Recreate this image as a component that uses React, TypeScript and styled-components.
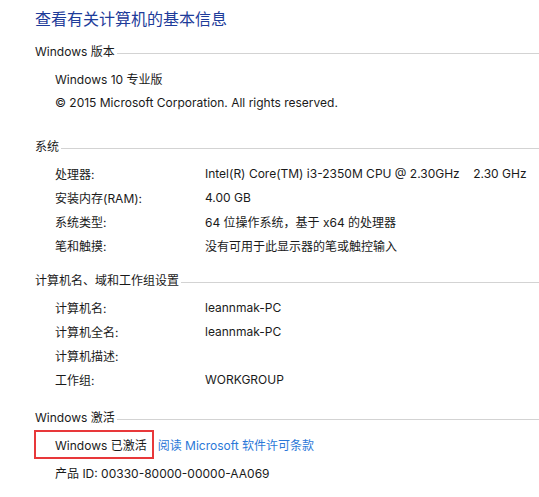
import React from "react";
import styled, { createGlobalStyle } from "styled-components";

const text_color = "#1a1a1a";
const title_blue = "#1e3c9a";
const link_blue = "#2b78d8";
const rule_grey = "#d3d3d3";
const mark_red = "#e8383a";

const GlobalStyle = createGlobalStyle`
    html, body {
        margin: 0;
        padding: 0;
        background: #ffffff;
    }
    body {
        font-family: Inter, "Noto Sans CJK SC", sans-serif;
        font-size: 12px;
        color: ${text_color};
    }
`;

const sections = [
    {
        title: "Windows 版本",
        gap: 11,
        after: 23,
        rows: [
            { label: "Windows 10 专业版" },
            { label: "© 2015 Microsoft Corporation. All rights reserved." },
        ],
    },
    {
        title: "系统",
        gap: 13,
        after: 0,
        rows: [
            { label: "处理器:", value: "Intel(R) Core(TM) i3-2350M CPU @ 2.30GHz\u00a0\u00a0\u00a0 2.30 GHz" },
            { label: "安装内存(RAM):", value: "4.00 GB" },
            { label: "系统类型:", value: "64 位操作系统，基于 x64 的处理器" },
            { label: "笔和触摸:", value: "没有可用于此显示器的笔或触控输入" },
        ],
    },
    {
        title: "计算机名、域和工作组设置",
        gap: 14,
        after: 0,
        rows: [
            { label: "计算机名:", value: "leannmak-PC" },
            { label: "计算机全名:", value: "leannmak-PC" },
            { label: "计算机描述:", value: "" },
            { label: "工作组:", value: "WORKGROUP" },
        ],
    },
];

export const App = () => {
    return (
        <Page>
            <GlobalStyle />
            <Title>查看有关计算机的基本信息</Title>
            {sections.map((s) => (
                <Section key={s.title} $gap={s.gap} $after={s.after}>
                    <Header>
                        <HeaderText>{s.title}</HeaderText>
                        <Rule />
                    </Header>
                    {s.rows.map((r, j) =>
                        "value" in r ? (
                            <Row key={j}>
                                <Label>{r.label}</Label>
                                <Value>{r.value}</Value>
                            </Row>
                        ) : (
                            <Row key={j}>
                                <Wide>{r.label}</Wide>
                            </Row>
                        )
                    )}
                </Section>
            ))}
            <Section $gap={17}>
                <Header>
                    <HeaderText>Windows 激活</HeaderText>
                    <Rule />
                </Header>
                <ActivationRow>
                    <Marked>Windows 已激活</Marked>
                    <Link href="#">阅读 Microsoft 软件许可条款</Link>
                </ActivationRow>
                <Row>
                    <Wide>产品 ID: 00330-80000-00000-AA069</Wide>
                </Row>
            </Section>
        </Page>
    );
};

const Page = styled.div`
    padding: 7px 0 0 35px;
    width: 539px;
    box-sizing: border-box;
`;

const Title = styled.h1`
    margin: 0;
    font-size: 16px;
    font-weight: normal;
    line-height: 24px;
    color: ${title_blue};
`;

const Section = styled.section<{ $gap: number; $after?: number }>`
    margin-top: ${(p) => p.$gap}px;
    margin-bottom: ${(p) => p.$after ?? 0}px;
`;

const Header = styled.div`
    display: flex;
    align-items: center;
    height: 20px;
`;

const HeaderText = styled.span`
    white-space: nowrap;
    line-height: 20px;
`;

const Rule = styled.div`
    flex: 1;
    height: 1px;
    margin: 3px 0 0 2px;
    background: ${rule_grey};
`;

const Row = styled.div`
    display: grid;
    grid-template-columns: 150px 1fr;
    align-items: center;
    height: 24px;
    padding-left: 20px;
    white-space: nowrap;
    &:nth-of-type(2) {
        margin-top: 4px;
    }
`;

const Label = styled.span``;

const Value = styled.span``;

const Wide = styled.span`
    grid-column: 1 / -1;
`;

const ActivationRow = styled.div`
    display: flex;
    align-items: center;
    margin: 2px 0 1px -1px;
    white-space: nowrap;
`;

const Marked = styled.span`
    display: inline-flex;
    align-items: center;
    height: 29px;
    box-sizing: border-box;
    padding: 0 5px 0 19px;
    border: 2px solid ${mark_red};
`;

const Link = styled.a`
    margin-left: 4px;
    color: ${link_blue};
    text-decoration: none;
`;

export default App;
